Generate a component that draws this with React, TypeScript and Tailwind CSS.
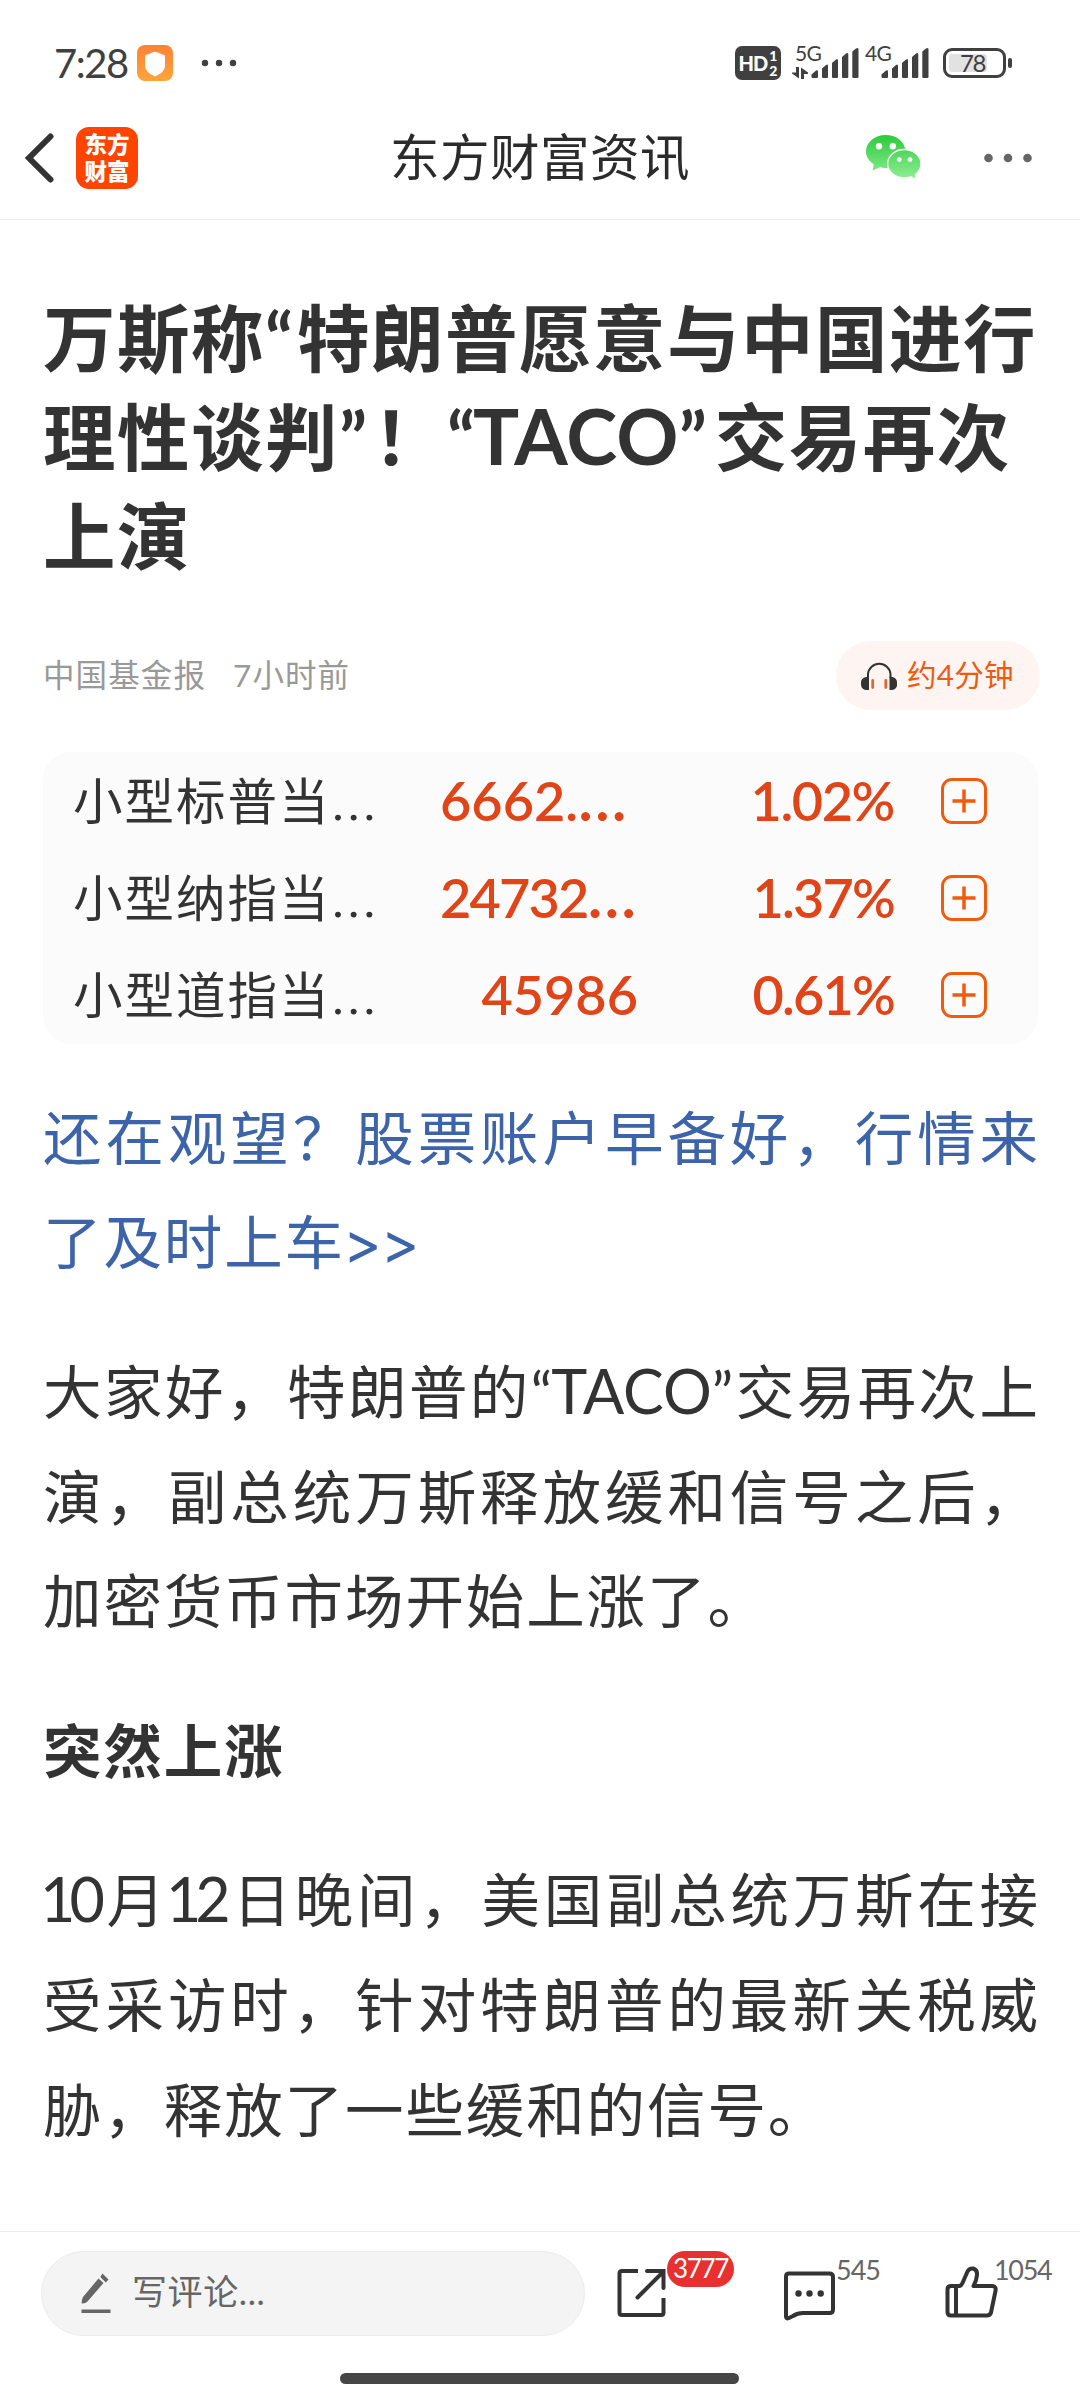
import type { ReactNode } from "react";
import { clsx } from "clsx";

type Quote = {
  name: string;
  price: string;
  truncated?: boolean;
  priceClass: string;
  change: string;
  changeClass: string;
};

type LineProps = {
  children: ReactNode;
  justify?: boolean;
};

const quotes: Quote[] = [
  {
    name: "小型标普当",
    price: "6662.",
    truncated: true,
    priceClass: "pl-[9px] text-left",
    change: "1.02%",
    changeClass: "tracking-[-1.4px]",
  },
  {
    name: "小型纳指当",
    price: "24732",
    truncated: true,
    priceClass: "pl-[9px] text-left tracking-[-1.8px]",
    change: "1.37%",
    changeClass: "tracking-[-1.8px]",
  },
  {
    name: "小型道指当",
    price: "45986",
    priceClass: "text-right",
    change: "0.61%",
    changeClass: "tracking-[-1.8px]",
  },
];

function Line({ children, justify }: LineProps) {
  return (
    <span
      className={clsx(
        "block whitespace-nowrap",
        justify && "[text-align-last:justify]",
      )}
    >
      {children}
    </span>
  );
}

function SignalBars() {
  return (
    <svg width="49" height="32" viewBox="0 0 49 32" fill="#404040">
      <path d="M0.5 27.5 5 23.6Q7 22.3 7 24.6V30q0 1-1 1H1.500q-1 0-1-1z" />
      <path d="M11 21.500 15 18Q17 16.500 17 19V30q0 1-1 1H12q-1 0-1-1z" />
      <path d="M21 16 25 12.500Q27 11 27 13.500V30q0 1-1 1H22q-1 0-1-1z" />
      <path d="M31 10 35 6.500Q37.300 5 37.300 7.500V30q0 1-1 1H32q-1 0-1-1z" />
      <path d="M41.300 4.500 45 1.500Q47.500 0 47.500 2.500V30q0 1-1 1H42.300q-1 0-1-1z" />
    </svg>
  );
}

function StatusBar() {
  return (
    <div className="flex h-[96px] items-end pb-[15px] pl-[54px] pr-[68px] text-[#404040]">
      <div className="flex h-9 items-center">
        <span className="w-[83px] text-[40px] leading-9 tracking-[-1.5px]">7:28</span>
        <svg width="36" height="36" viewBox="0 0 36 36">
          <defs>
            <linearGradient id="shield" x1="0" y1="0" x2="0" y2="1">
              <stop offset="0" stopColor="#ff8135" />
              <stop offset="1" stopColor="#ffa53c" />
            </linearGradient>
          </defs>
          <rect width="36" height="36" rx="8" fill="url(#shield)" />
          <path
            d="M18 6.500 27 10q1 .4 1 1.500V21q0 6-10 10.500Q8 27 8 21V11.500q0-1.100 1-1.500z"
            fill="#fff"
          />
        </svg>
        <svg className="ml-[28px]" width="36" height="8" viewBox="0 0 36 8" fill="#404040">
          <circle cx="4" cy="4" r="3.200" />
          <circle cx="18" cy="4" r="3.200" />
          <circle cx="32" cy="4" r="3.200" />
        </svg>
      </div>
      <div className="ml-auto flex h-9 items-center">
        <div className="flex h-[34px] w-[46px] items-center justify-center rounded-[7px] bg-[#404040] font-black text-white">
          <span className="text-[20px] leading-none tracking-[-1px]">HD</span>
          <span className="ml-[2px] flex flex-col text-[14px] leading-[15px]">
            <span>1</span>
            <span>2</span>
          </span>
        </div>
        <div className="relative ml-[30px] h-8">
          <SignalBars />
          <span className="absolute left-[-16px] top-[-3px] text-[21px] leading-[18px] tracking-[-0.8px]">
            5G
          </span>
          <svg
            className="absolute left-[-19px] top-[20px]"
            width="16"
            height="12"
            viewBox="0 0 16 12"
            fill="#404040"
          >
            <path d="M4 0h3v11.500L0 6.500V5.500h4zM9 12V.5l7 5V7h-4v5z" />
          </svg>
        </div>
        <div className="relative ml-[21px] h-8">
          <SignalBars />
          <span className="absolute left-[-16px] top-[-3px] text-[21px] leading-[18px] tracking-[-0.8px]">
            4G
          </span>
        </div>
        <div className="ml-[13px] flex items-center gap-[2px]">
          <div className="flex h-[30px] w-[63px] rounded-[9px] border-[3px] border-[#404040] p-[3px]">
            <div className="relative w-[38px] rounded-[3px] bg-[#e2e2e2]">
              <span className="absolute left-[11px] top-0 text-[24px] leading-[18px] tracking-[-1.500px]">
                78
              </span>
            </div>
          </div>
          <div className="h-[10px] w-[4px] rounded-full bg-[#404040]" />
        </div>
      </div>
    </div>
  );
}

function NavBar() {
  return (
    <header className="flex h-[124px] items-center border-b border-[#ececec] pl-[24px] pr-[47px]">
      <svg width="30" height="50" viewBox="0 0 30 50" fill="none">
        <path
          d="M26.500 3.500 5 25l21.500 21.500"
          stroke="#333"
          strokeWidth="6"
          strokeLinecap="round"
          strokeLinejoin="miter"
        />
      </svg>
      <div className="ml-[22px] flex h-[62px] w-[62px] flex-col items-center justify-center rounded-[13px] bg-[#ff4400] pb-px font-['Noto_Sans_CJK_SC'] text-[22.500px] font-black leading-[27px] text-white">
        <span>东方</span>
        <span>财富</span>
      </div>
      <h1 className="mb-px ml-[252px] whitespace-nowrap text-[49.5px] leading-[60px] tracking-[0.5px] text-[#2b2b2b]">
        东方财富资讯
      </h1>
      <svg className="ml-auto" width="56" height="45" viewBox="0 0 56 45">
        <defs>
          <linearGradient id="chat" x1="0" y1="0" x2="0" y2="45" gradientUnits="userSpaceOnUse">
            <stop offset="0" stopColor="#2bcb3b" />
            <stop offset="1" stopColor="#93ee97" />
          </linearGradient>
        </defs>
        <path
          d="M19.800 0C30.700 0 39.500 7.300 39.500 16.500S30.700 33 19.800 33c-2 0-4-.2-5.800-.8L6.500 35.500l1.300-6.200C3 26.300 0 21.700 0 16.500 0 7.300 8.900 0 19.800 0z"
          fill="url(#chat)"
        />
        <path
          d="M38.300 14.500C47.500 14.500 55 20.900 55 28.800c0 4.200-2.100 7.900-5.300 10.500l.6 5.200-5.600-2.700c-2 .7-4.100 1.200-6.400 1.200-9.200 0-16.700-6.400-16.700-14.200s7.500-14.300 16.700-14.300z"
          fill="url(#chat)"
          stroke="#fff"
          strokeWidth="1.300"
        />
        <g fill="#fff">
          <circle cx="13" cy="11.300" r="3.200" />
          <circle cx="26.800" cy="11.300" r="3.200" />
          <circle cx="33.300" cy="24.600" r="2.400" />
          <circle cx="44" cy="24.600" r="2.400" />
        </g>
      </svg>
      <svg className="ml-[61px]" width="50" height="10" viewBox="0 0 50 10" fill="#666">
        <circle cx="5.500" cy="5" r="4.300" />
        <circle cx="25" cy="5" r="4.300" />
        <circle cx="44.500" cy="5" r="4.300" />
      </svg>
    </header>
  );
}

function QuoteRow({ quote }: { quote: Quote }) {
  return (
    <li className="flex h-[97.300px] items-center pl-[30px]">
      <span className="w-[358px] whitespace-nowrap text-[49.5px] leading-[96px] tracking-[2px] text-[#333]">
        {quote.name}
        <span className="text-[64px] font-light leading-none">…</span>
      </span>
      <span
        className={clsx(
          "w-[207px] whitespace-nowrap text-[54px] font-semibold leading-[96px] text-[#df4518]",
          quote.priceClass,
        )}
      >
        {quote.price}
        {quote.truncated && <span className="text-[64px] leading-none">…</span>}
      </span>
      <span
        className={clsx(
          "w-[256px] text-right text-[54px] font-semibold leading-[96px] text-[#df4518]",
          quote.changeClass,
        )}
      >
        {quote.change}
      </span>
      <svg className="ml-[47px]" width="46" height="46" viewBox="0 0 46 46" fill="none">
        <rect x="1.500" y="1.500" width="43" height="43" rx="9.500" stroke="#f25a0c" strokeWidth="3" />
        <path d="M23 11.500v23M11.500 23h23" stroke="#f25a0c" strokeWidth="3.500" />
      </svg>
    </li>
  );
}

function Article() {
  return (
    <main className="flex-1 pl-[43px] pr-[40px] pt-[68px] text-[#333]">
      <h2 className="text-[72.500px] font-bold leading-[99px] tracking-[1.500px]">
        <Line>
          万斯称<span className="tracking-[4px]">“</span>特朗普愿意与中国进行
        </Line>
        <Line>
          理性谈判<span className="tracking-[6px]">”</span>！
          <span className="tracking-[-2px]">“</span>
          <span className="text-[77px] leading-none tracking-[0.300px]">TACO</span>
          <span className="tracking-[8px]">”</span>交易再次
        </Line>
        <Line>上演</Line>
      </h2>

      <div className="mt-[56px] flex h-[69px] items-center text-[31.500px] tracking-[1.100px] text-[#999]">
        <span>中国基金报</span>
        <span className="ml-[27px]">7小时前</span>
        <div className="ml-auto flex h-[69px] w-[204px] items-center rounded-full bg-[#fef5f2] pl-[25px] text-[#ee5a10]">
          <svg width="36" height="30" viewBox="0 0 36 30" fill="none">
            <path d="M7 17V13a11.300 11.300 0 0 1 22.500 0V17" stroke="#333" strokeWidth="2" />
            <path d="M8 15.500V29H5.500a5.500 5.500 0 0 1-5.500-5.500v-2q0-4.500 5-5.500zM28.500 15.500V29H31a5 5 0 0 0 5-5.500v-2q0-4.500-4.500-5.500z" fill="#333" />
            <path d="M11.700 19.500v7M24.800 19.500v7" stroke="#dc6a35" strokeWidth="2.800" strokeLinecap="round" />
          </svg>
          <span className="ml-[10px] whitespace-nowrap text-[29.500px] tracking-[0.300px]">
            约4分钟
          </span>
        </div>
      </div>

      <ul className="mt-[42px] w-[995px] rounded-[28px] bg-[#fbfbfb]">
        {quotes.map((quote) => (
          <QuoteRow key={quote.name} quote={quote} />
        ))}
      </ul>

      <div className="mt-[41px] flex flex-col gap-[45px] text-[58.500px] leading-[104.600px] tracking-[1.900px]">
        <p className="text-[#3d64a8]">
          <Line justify>还在观望？股票账户早备好，行情来</Line>
          <Line>
            了及时上车
            <span className="-ml-[2px] font-['Inter'] leading-none tracking-[-1px]">&gt;&gt;</span>
          </Line>
        </p>
        <p>
          <Line justify>
            大家好，特朗普的“
            <span className="-ml-[3px] text-[61px] leading-none tracking-[0px]">TACO</span>
            ”交易再次上
          </Line>
          <Line justify>演，副总统万斯释放缓和信号之后，</Line>
          <Line>加密货币市场开始上涨了。</Line>
        </p>
        <h3 className="font-bold">突然上涨</h3>
        <p>
          <Line justify>
            <span className="-ml-[3px] mr-[6px] text-[61px] leading-none tracking-[-6px]">10</span>月
            <span className="-ml-[3px] mr-[6px] text-[61px] leading-none tracking-[-6px]">12</span>
            日晚间，美国副总统万斯在接
          </Line>
          <Line justify>受采访时，针对特朗普的最新关税威</Line>
          <Line>胁，释放了一些缓和的信号。</Line>
        </p>
      </div>
    </main>
  );
}

function BottomBar() {
  return (
    <footer className="h-[169px] border-t border-[#ececec]">
      <div className="mt-[19px] flex h-[85px] pl-[41px]">
        <div className="flex h-[85px] w-[544px] items-center rounded-full border border-[#ececec] bg-[#f4f4f4] pl-[39px] text-[35px] tracking-[0.600px] text-[#666]">
          <svg width="30" height="41" viewBox="0 0 30 41" fill="#666">
            <path d="M17.500 5.500 22.500 10 6.500 28.500Q4 31 .8 30.500.3 27 2 24zM21.500.500 27.500 6.500 24.800 9.500 19.300 4z" />
            <path d="M.5 36.500h29v3.500H.5z" />
          </svg>
          <span className="mb-[4px] ml-[21px]">写评论...</span>
        </div>

        <div className="relative ml-[32px] mt-[17px] h-[50px] w-[50px]">
          <svg width="50" height="50" viewBox="0 0 50 50" fill="none" stroke="#333" strokeWidth="4">
            <path d="M21 3H5Q2.500 3 2.500 5.500V44.500Q2.500 47 5 47H44Q46.500 47 46.500 44.500V30" />
            <path d="M30 3H46.500V20M46 4 20.500 29.500" strokeLinecap="round" />
          </svg>
          <span className="absolute left-[50px] top-[-17px] flex h-[36px] w-[67px] items-center justify-center rounded-full bg-[#e83030] pb-[2px] text-[26px] leading-none tracking-[-1.300px] text-white">
            3777
          </span>
        </div>

        <div className="relative ml-[116px] mt-[20px] h-[50px] w-[52px]">
          <svg width="52" height="50" viewBox="0 0 52 50" fill="none">
            <path
              d="M6 2.500H46.500Q50 2.500 50 6V38.500Q50 42 46.500 42H20Q14.500 42 10 45L5.500 47.200Q3 48 3 45.500V5.500Q3 2.500 6 2.500z"
              stroke="#333"
              strokeWidth="4"
            />
            <g fill="#333">
              <circle cx="15.500" cy="22.500" r="3.200" />
              <circle cx="26.500" cy="22.500" r="3.200" />
              <circle cx="37.700" cy="22.500" r="3.200" />
            </g>
          </svg>
          <span className="absolute left-[53px] top-[-15px] text-[27px] leading-[28px] tracking-[-1px] text-[#666]">
            545
          </span>
        </div>

        <div className="relative ml-[110px] mt-[15px] h-[52px] w-[53px]">
          <svg width="53" height="52" viewBox="0 0 53 52" fill="none" stroke="#333" strokeWidth="4" strokeLinejoin="round">
            <path d="M6 20H14.500Q16.500 19.500 17.500 17L22.500 5.500Q24.500 2 28 2.500 32.500 3.500 32 9 31.500 15 28.500 20H47.500Q51.500 20.500 50.500 25L46 46.500Q45 49.500 42 49.500H6Q2.500 49.500 2.500 46V23.500Q2.500 20 6 20z" />
            <path d="M11 20.500V49" />
          </svg>
          <span className="absolute left-[49px] top-[-10px] text-[27px] leading-[28px] tracking-[-1.300px] text-[#666]">
            1054
          </span>
        </div>
      </div>
      <div className="ml-[340px] mt-[37px] h-[11px] w-[399px] rounded-full bg-[#464646]" />
    </footer>
  );
}

export default function App() {
  return (
    <div className="flex h-[2400px] w-[1080px] flex-col overflow-hidden bg-white font-['Lato','Noto_Sans_CJK_SC',sans-serif]">
      <StatusBar />
      <NavBar />
      <Article />
      <BottomBar />
    </div>
  );
}
